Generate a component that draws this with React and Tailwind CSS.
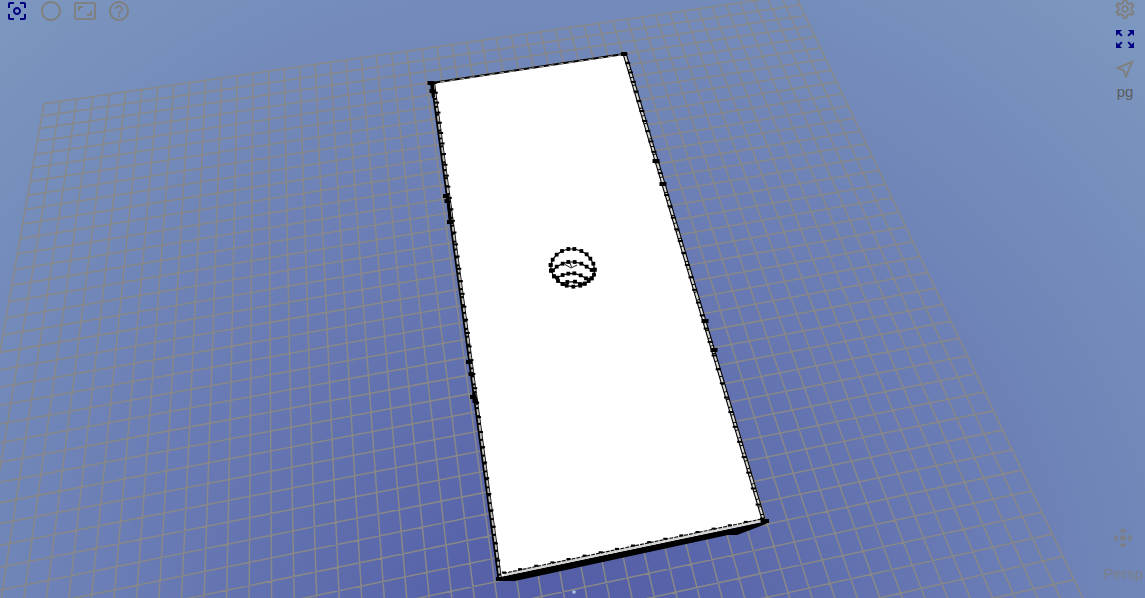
import React from "react";
import {
  MdCenterFocusWeak,
  MdRadioButtonUnchecked,
  MdAspectRatio,
  MdHelpOutline,
  MdOutlineSettings,
  MdZoomOutMap,
  MdOutlineNearMe,
  MdControlCamera,
} from "react-icons/md";

const GRID = 50;

// Perspective projection of a ground-plane point onto the viewport.
function project(u, v) {
  const w = 1 + 0.001933 * u - 0.009907 * v;
  return [
    (44 + 16.56 * u - 2.5922 * v) / w,
    (103.7 - 2.188 * u + 11.137 * v) / w,
  ];
}

const gridPath = Array.from({ length: GRID + 1 }, (_, i) => {
  const lines = [
    [project(i, 0), project(i, GRID)],
    [project(0, i), project(GRID, i)],
  ];
  return lines
    .map(([a, b]) => `M${a[0].toFixed(1)} ${a[1].toFixed(1)}L${b[0].toFixed(1)} ${b[1].toFixed(1)}`)
    .join("");
}).join("");

// Foreshortened division of an edge; the far end of the slab is at a.
function divide(a, b, count, ratio) {
  return Array.from({ length: count + 1 }, (_, k) => {
    const t = k / count;
    const d = 1 - t + ratio * t;
    return [
      (a[0] * (1 - t) + b[0] * ratio * t) / d,
      (a[1] * (1 - t) + b[1] * ratio * t) / d,
    ];
  });
}

const leftTicks = divide([434, 83], [500, 578], 38, 0.742);
const rightTicks = divide([625, 54], [763, 521], 38, 0.742);
const frontTicks = divide([504, 573], [762, 519], 16, 1);

const knots = [
  [431, 83, 7], [432, 91, 5], [446, 196, 6], [447, 201, 5], [450, 222, 6],
  [469, 362, 6], [471, 374, 5], [473, 397, 6], [475, 401, 5], [500, 579, 8],
  [624, 54, 6], [656, 161, 7], [663, 184, 7], [705, 321, 7], [714, 350, 7],
  [765, 521, 8],
];

const sphereRings = [
  [[32, 90], [38, 74], [50, 59], [66, 48], [85, 42], [103, 42], [124, 48], [140, 58], [151, 71], [160, 86], [164, 104], [162, 119], [155, 130], [146, 138], [134, 146], [121, 152], [100, 155], [80, 152], [68, 147], [54, 138], [42, 124], [33, 107], [32, 90]],
  [[33, 107], [39, 106], [50, 95], [68, 86], [85, 81], [104, 81], [124, 86], [140, 95], [155, 105], [164, 104]],
  [[42, 124], [52, 128], [68, 120], [85, 116], [103, 115], [122, 121], [138, 130], [155, 130]],
  [[68, 147], [82, 141], [105, 140], [120, 147], [134, 146]],
].map((ring) => ring.map(([x, y]) => [540 + x / 3, 235 + y / 3]));

function Scene() {
  return (
    <svg
      className="absolute inset-0 h-full w-full"
      viewBox="0 0 1145 598"
      preserveAspectRatio="xMidYMid slice"
      role="img"
      aria-label="3D viewport"
    >
      <defs>
        <radialGradient id="sky" gradientUnits="userSpaceOnUse" cx="560" cy="650" r="900">
          <stop offset="0" stopColor="#515ca6" />
          <stop offset="0.12" stopColor="#5661a8" />
          <stop offset="0.36" stopColor="#6373b0" />
          <stop offset="0.5" stopColor="#6b7db5" />
          <stop offset="0.64" stopColor="#7086b8" />
          <stop offset="0.82" stopColor="#7790bc" />
          <stop offset="1" stopColor="#7e9ac1" />
        </radialGradient>
      </defs>
      <rect width="1145" height="598" fill="url(#sky)" />
      <path d={gridPath} fill="none" stroke="#888888" strokeWidth="1.5" />

      <polygon points="432,83 624,54 766,521 501,578" fill="#ffffff" />
      <polygon points="500,577 505,576 763,522 768,521 766,524 737,535 728,535 515,581 498,581" fill="#000000" />
      <path d="M504 575L761 521" stroke="#d4d4d0" strokeWidth="2.2" />
      <path d="M503 573.5L762 519" stroke="#111111" strokeWidth="1.2" strokeDasharray="4 1" />
      <path d="M432 83L624 54" stroke="#000000" strokeWidth="2" />
      <path d="M440 82L624 54.300" stroke="#b0b0b0" strokeWidth="0.9" strokeDasharray="5 5" />

      <path d="M433 84L499.500 577" stroke="#000000" strokeWidth="4.4" />
      <path d="M433.500 84L500 577" stroke="#b8b8b4" strokeWidth="1.9" strokeDasharray="6 2" />
      <path d="M625 55L764 521" stroke="#000000" strokeWidth="4.2" />
      <path d="M625 55L764 521" stroke="#d6d6d2" strokeWidth="2" strokeDasharray="7 1" />

      <g fill="#000000">
        {[...leftTicks, ...rightTicks].map(([x, y], i) => (
          <rect key={i} x={x - 2.5} y={y - 1} width="5" height="2" />
        ))}
        {frontTicks.map(([x, y], i) => (
          <rect key={i} x={x - 2} y={y - 1.5} width="4" height="2" />
        ))}
        {knots.map(([x, y, w], i) => (
          <rect key={i} x={x - w / 2} y={y - 2} width={w} height="4" />
        ))}
        <path d="M430 84L432 98L435 97L434 84ZM472 393L476 405L479 404L475 392ZM446 195L449 224L452 222L449 195Z" />
      </g>

      <g fill="none" stroke="#000000" strokeWidth="1.2">
        {sphereRings.map((ring, i) => (
          <polyline key={i} points={ring.map((p) => p.join(",")).join(" ")} />
        ))}
        <path d="M565 264.500L571 268L577 265M570 263L571.500 267" strokeWidth="0.9" />
      </g>
      <g fill="#000000">
        {sphereRings.flat().map(([x, y], i) => (
          <rect key={i} x={x - 1.9} y={y - 1.9} width="3.800" height="3.800" />
        ))}
      </g>

      <circle cx="574" cy="592" r="1.800" fill="#a9c2e6" />
    </svg>
  );
}

function ToolButton({ icon: Icon, label, active }) {
  return (
    <button
      type="button"
      aria-label={label}
      className={active ? "block text-[#000080]" : "block text-[#808080]"}
    >
      <Icon className="size-6" />
    </button>
  );
}

export default function App() {
  return (
    <main className="relative flex min-h-screen flex-col justify-between overflow-hidden bg-[#6f86b8] font-['Liberation_Sans',Arial,sans-serif]">
      <Scene />

      <header className="relative -mt-px flex items-start justify-between pl-[5px] pr-2">
        <nav aria-label="View" className="flex gap-2.5">
          <ToolButton icon={MdCenterFocusWeak} label="Center view" active />
          <ToolButton icon={MdRadioButtonUnchecked} label="Toggle outline" />
          <ToolButton icon={MdAspectRatio} label="Aspect ratio" />
          <ToolButton icon={MdHelpOutline} label="Help" />
        </nav>
        <nav aria-label="Scene" className="-mt-0.5 flex flex-col items-center">
          <div className="flex flex-col gap-1.5">
            <ToolButton icon={MdOutlineSettings} label="Settings" />
            <ToolButton icon={MdZoomOutMap} label="Zoom to fit" active />
            <ToolButton icon={MdOutlineNearMe} label="Navigate" />
          </div>
          <button type="button" className="mt-[3px] text-[15px] leading-4 text-[#5c5c5c]">pg</button>
        </nav>
      </header>

      <footer className="relative flex flex-col items-end gap-4 pb-4 pr-0.5 text-[#7c7f88]">
        <button type="button" aria-label="Pan camera" className="mr-2">
          <MdControlCamera className="size-6" />
        </button>
        <button type="button" className="text-[15px] leading-4">Persp</button>
      </footer>
    </main>
  );
}
